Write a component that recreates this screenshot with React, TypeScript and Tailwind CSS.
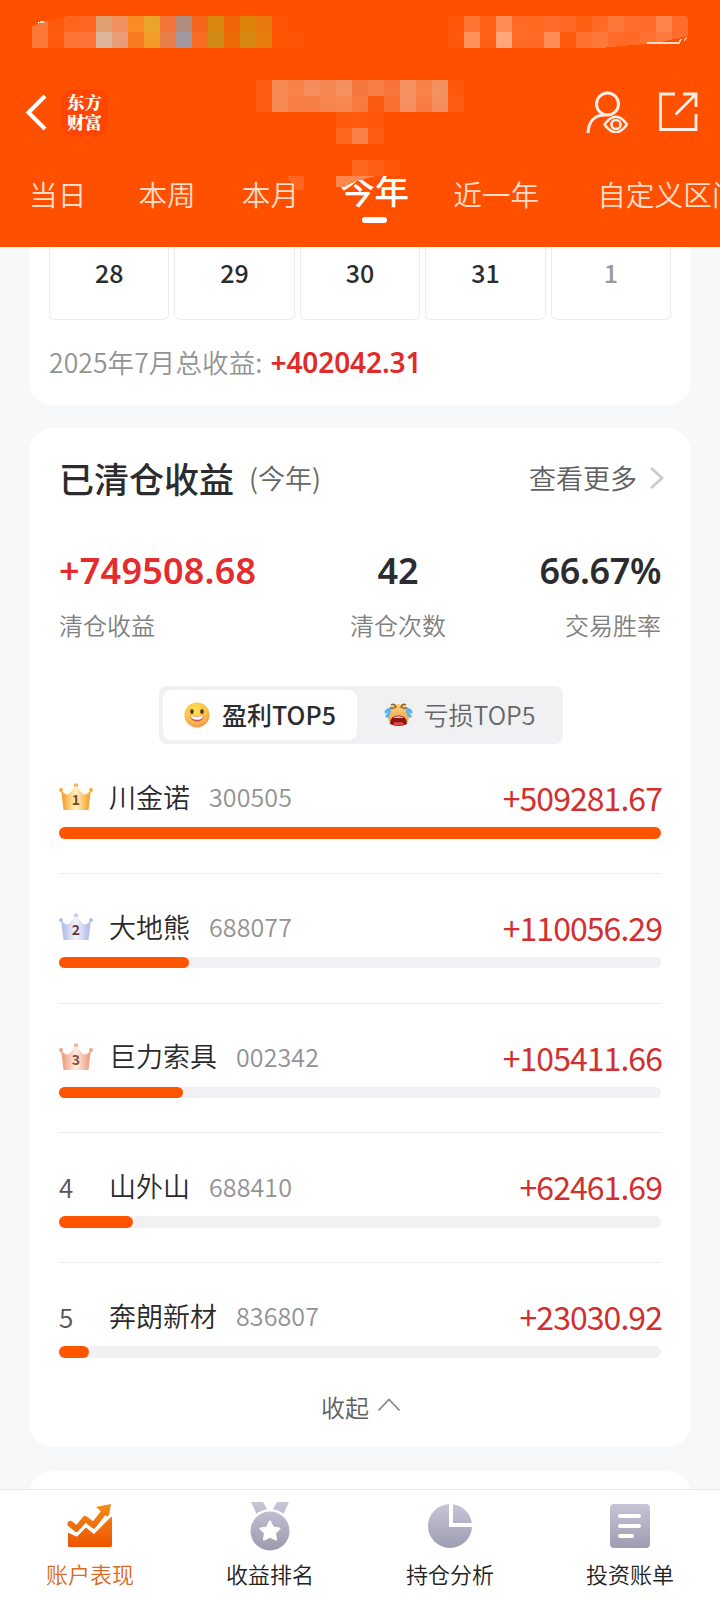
import { ReactNode } from "react";

const num = "font-['Noto_Sans','Noto_Sans_CJK_SC',sans-serif]";

const stocks = [
  { name: "川金诺", code: "300505", profit: "+509281.67", width: 602 },
  { name: "大地熊", code: "688077", profit: "+110056.29", width: 130 },
  { name: "巨力索具", code: "002342", profit: "+105411.66", width: 124 },
  { name: "山外山", code: "688410", profit: "+62461.69", width: 74 },
  { name: "奔朗新材", code: "836807", profit: "+23030.92", width: 30 },
];

const crowns = [
  { edge: "#f5a838", mid: "#fff3c4", text: "#7a4a20" },
  { edge: "#b9c0ea", mid: "#f4f5fd", text: "#6b3a2c" },
  { edge: "#f0a488", mid: "#fdeee6", text: "#8a5040" },
];

// pixelated blocks, [x, y, colour], 16px each
const blocks: [number, number, string][] = [
  [48, 16, "#ff5a0c"], [48, 32, "#ff5a0e"],
  [64, 16, "#ff651c"], [64, 32, "#ff7433"],
  [80, 16, "#ff6621"], [80, 32, "#ff7436"],
  [96, 16, "#e0a072"], [96, 32, "#ddb59a"],
  [112, 16, "#f39060"], [112, 32, "#e89c78"],
  [128, 16, "#fb8b24"], [128, 32, "#fa7a20"],
  [144, 16, "#e8a52a"], [144, 32, "#f39c2a"],
  [160, 16, "#f47338"], [160, 32, "#e87d48"],
  [176, 16, "#b38c80"], [176, 32, "#a3989f"],
  [192, 16, "#f5661c"], [192, 32, "#f66d22"],
  [208, 16, "#d8860c"], [208, 32, "#d08b16"],
  [224, 16, "#f06606"], [224, 32, "#ee6a06"],
  [240, 16, "#dd8408"], [240, 32, "#d48810"],
  [256, 16, "#e8790c"], [256, 32, "#e67c0c"],
  [272, 16, "#ff5505"], [272, 32, "#ff5606"],
  [288, 32, "#ff5505"],
  [448, 16, "#ff560a"], [448, 32, "#ff580c"],
  [464, 16, "#ff7533"], [464, 32, "#ff935c"],
  [480, 16, "#ff6216"], [480, 32, "#ff6014"],
  [496, 16, "#ff8d57"], [496, 32, "#ffa77b"],
  [512, 16, "#ff6b27"], [512, 32, "#ff6a24"],
  [528, 16, "#ff6921"], [528, 32, "#ff6a24"],
  [544, 16, "#ff6c29"], [544, 32, "#ff8d57"],
  [560, 16, "#ff6b27"], [560, 32, "#ff5a0c"],
  [576, 16, "#ff5f12"], [576, 32, "#ff7230"],
  [592, 16, "#ff6a25"], [592, 32, "#ff783a"],
  [608, 16, "#ff783a"], [608, 32, "#ff6c28"],
  [624, 16, "#ff6e2c"], [624, 32, "#ff6a24"],
  [640, 16, "#ff6c29"], [640, 32, "#ff7230"],
  [656, 16, "#ff854c"], [656, 32, "#ff7a3c"],
  [256, 80, "#ff5c12"], [256, 96, "#ff5c12"],
  [272, 80, "#f58a54"], [272, 96, "#f68a54"],
  [288, 80, "#f7824a"], [288, 96, "#f77e44"],
  [304, 80, "#f58e5c"], [304, 96, "#f67e44"],
  [320, 80, "#f58852"], [320, 96, "#f6864e"],
  [336, 80, "#f6915f"], [336, 96, "#f68850"],
  [352, 80, "#f5763c"], [352, 96, "#f87a40"],
  [368, 80, "#f88048"], [368, 96, "#fc5a10"],
  [384, 80, "#f8743a"], [384, 96, "#fa702f"],
  [400, 80, "#f79260"], [400, 96, "#f79060"],
  [416, 80, "#f88248"], [416, 96, "#f87c44"],
  [432, 80, "#f39260"], [432, 96, "#f48e5c"],
  [448, 80, "#ff580c"], [448, 96, "#ff5c12"],
  [336, 112, "#ff5a0c"], [352, 112, "#ff5a0e"], [368, 112, "#ff560a"],
  [336, 128, "#ff6820"], [352, 128, "#f98048"], [368, 128, "#ff5c12"],
  [352, 160, "#ff6820"], [368, 160, "#ff5e14"], [384, 160, "#ff5608"],
];

function Mosaic() {
  return (
    <svg className="absolute left-0 top-0 pointer-events-none" width="720" height="247" shapeRendering="crispEdges">
      <path d="M32 26L48 21V48H32z" fill="#fb7838" />
      {blocks.map(([x, y, color]) => (
        <rect key={`${x}-${y}`} x={x} y={y} width="16" height="16" fill={color} />
      ))}
      <path d="M32 16h36L32 25z" fill="#ff5000" />
      <path d="M672 16h13q3 0 3 4v16l-4 4h-12z" fill="#ff6c2c" />
      <path d="M600 48l56-5 32-7v12z" fill="#ff5000" />
      <path d="M647 43h32l2-4" fill="none" stroke="#ffd9c4" strokeWidth="1.5" />
      <path d="M687 38l-3 2" stroke="#ffc4a6" strokeWidth="1.5" />
      <path d="M38 23q4-2 7-.5" fill="none" stroke="#ffd9c4" strokeWidth="1.5" />
      <path d="M288 176h16v14h-8q-2-8-8-10z" fill="#ff6622" />
      <path d="M336 176h40l-20 5-12 6h-8z" fill="#ff8850" />
    </svg>
  );
}

function Tab({ children, className }: { children: ReactNode; className?: string }) {
  return <div className={`shrink-0 text-[28.7px] leading-10 font-[350] text-[#ffddca] ${className}`}>{children}</div>;
}

function Header() {
  return (
    <header className="relative h-[247px] shrink-0 bg-[#ff5000] overflow-hidden">
      <div className="flex items-center h-[56px] mt-[84px] pl-[25px] pr-[22px]">
        <svg width="22" height="36" viewBox="0 0 22 36" fill="none" stroke="#fff" strokeWidth="4">
          <path d="M20 2L3.500 18.500L20 35" />
        </svg>
        <div className="ml-[14px] size-[47px] rounded-xl bg-[#ff4600] flex flex-col items-center justify-center text-white text-[17.500px] leading-[20px] font-black font-['Noto_Serif_CJK_SC','Noto_Sans_CJK_SC',sans-serif]">
          <span>东方</span>
          <span>财富</span>
        </div>
        <div className="flex-1" />
        <svg width="42" height="42" viewBox="0 0 42 42" fill="none" stroke="#ffefe6" strokeWidth="3">
          <circle cx="21.500" cy="13" r="11" />
          <path d="M2 42C2.500 30 9 24 19 24" />
          <path d="M18.500 33.500Q30 18 41 33.500Q30 49 18.500 33.500z" fill="#ff5000" strokeWidth="2.600" />
          <circle cx="30" cy="33.500" r="4.500" strokeWidth="2.600" />
        </svg>
        <svg className="ml-[30px]" width="40" height="40" viewBox="0 0 40 40" fill="none" stroke="#ffefe6" strokeWidth="2.800">
          <path d="M17 2H2.500V37.500H38V22" />
          <path d="M25 2H38V15M38 2L17.500 22.500" />
        </svg>
      </div>
      <div className="flex items-center h-[56px] mt-[26px] pl-[29px] whitespace-nowrap">
        <Tab>当日</Tab>
        <Tab className="ml-[52px]">本周</Tab>
        <Tab className="ml-[46px]">本月</Tab>
        <div className="ml-[41px] h-[56px] shrink-0 flex flex-col items-center text-white">
          <div className="mt-[-1px] text-[34.500px] leading-[48px] font-medium">今年</div>
          <div className="mt-[4px] w-[25px] h-[6px] shrink-0 rounded-full bg-white" />
        </div>
        <Tab className="ml-[44px]">近一年</Tab>
        <Tab className="ml-[58px]">自定义区间</Tab>
      </div>
      <Mosaic />
    </header>
  );
}

function Crown({ rank }: { rank: number }) {
  const c = crowns[rank - 1];
  return (
    <svg width="34" height="28" viewBox="0 0 34 28">
      <defs>
        <linearGradient id={`crown${rank}`}>
          <stop offset="0.1" stopColor={c.edge} />
          <stop offset="0.5" stopColor={c.mid} />
          <stop offset="0.9" stopColor={c.edge} />
        </linearGradient>
      </defs>
      <g fill={c.edge}>
        <circle cx="2" cy="7" r="2" />
        <circle cx="17" cy="2.500" r="2.300" opacity="0.8" />
        <circle cx="32" cy="7" r="2" />
      </g>
      <path d="M2 7Q7 13 10 11L17 3L24 11Q27 13 32 7L29.500 27H4.500z" fill={`url(#crown${rank})`} />
      <text x="17" y="22" textAnchor="middle" fontSize="14" fontWeight="600" fill={c.text}>{rank}</text>
    </svg>
  );
}

function StockRow({ stock, rank }: { stock: typeof stocks[number]; rank: number }) {
  return (
    <div className={`h-[129.75px] pt-[33px] border-b ${rank == 5 ? "border-transparent" : "border-[#ededee]"}`}>
      <div className="flex items-center h-10">
        <div className="w-[50px] text-[26px] font-[350] text-[#555]">
          {rank <= 3 ? <Crown rank={rank} /> : rank}
        </div>
        <div className="text-[27px] font-[350] text-[#2a2a2a]">{stock.name}</div>
        <div className="ml-[19px] text-[25px] tracking-[0.1px] font-[350] text-[#939393]">{stock.code}</div>
        <div className="ml-auto mr-[-1px] text-[32px] tracking-[-0.95px] font-normal text-[#d23030]">{stock.profit}</div>
      </div>
      <div className="mt-[10px] h-[11.500px] rounded-full bg-[#f1f1f3]">
        <div className="h-full rounded-full bg-[#ff5400]" style={{ width: stock.width }} />
      </div>
    </div>
  );
}

function Smile() {
  return (
    <svg width="26" height="26" viewBox="0 0 26 26">
      <defs>
        <radialGradient id="smile" cx="0.45" cy="0.3" r="0.75">
          <stop offset="0" stopColor="#ffe252" />
          <stop offset="0.6" stopColor="#fbc04a" />
          <stop offset="1" stopColor="#f08a4c" />
        </radialGradient>
      </defs>
      <circle cx="13" cy="13" r="12.500" fill="url(#smile)" />
      <ellipse cx="8" cy="9.500" rx="1.800" ry="2.500" fill="#5a3a20" />
      <ellipse cx="18" cy="9.500" rx="1.800" ry="2.500" fill="#5a3a20" />
      <path d="M6 13.500Q13 15.500 20 13.500Q19 19.500 13 19.500T6 13.500z" fill="#d0584a" />
      <path d="M6.500 13.800Q13 15.500 19.500 13.800Q18.500 17.800 13 17.800T6.500 13.800z" fill="#fff" />
    </svg>
  );
}

function Cry() {
  return (
    <svg width="29" height="24" viewBox="0 0 29 24">
      <defs>
        <linearGradient id="cry" x2="0" y2="1">
          <stop offset="0" stopColor="#fbd078" />
          <stop offset="1" stopColor="#f09a48" />
        </linearGradient>
      </defs>
      <path d="M5 5Q8 1 14.500 1T24 5L25 15Q24 23 14.500 23T4 15z" fill="url(#cry)" />
      <path d="M7 2Q10 0 12 4Q9 6 6 5M22 2Q19 0 17 4Q20 6 23 5" fill="none" stroke="#7d6040" strokeWidth="1.500" />
      <path d="M6 4.500Q0 6 .5 10Q2 11 5 9Q0 12 2 15Q6 15 7 8zM23 4.500Q29 6 28.500 10Q27 11 24 9Q29 12 27 15Q23 15 22 8z" fill="#59b3ee" />
      <path d="M6 21Q6 12.500 14.500 12.500T23 21Q19 23 14.500 23T6 21z" fill="#8e1515" />
      <path d="M10 14Q14.500 12.500 19 14V15H10z" fill="#f0c0a8" />
      <path d="M9 21.500Q10 18 14.500 19.500Q19 18 20 21.500Q14.500 23.500 9 21.500z" fill="#e34a45" />
    </svg>
  );
}

function ClearedCard() {
  return (
    <section className="mt-[23px] mx-[29px] h-[1019px] shrink-0 rounded-[24px] bg-white px-[30px] overflow-hidden">
      <div className="flex items-center h-[50px] mt-[25px]">
        <h2 className="text-[35px] leading-[50px] font-medium text-[#2c2c2e]">已清仓收益</h2>
        <span className="ml-[15px] text-[27px] font-[350] text-[#666]">(今年)</span>
        <span className="ml-auto mr-[12px] text-[27px] font-[350] text-[#606060]">查看更多</span>
        <svg className="mr-[-4px]" width="16" height="24" viewBox="0 0 16 24" fill="none" stroke="#ccc" strokeWidth="2.800">
          <path d="M2 2L13 12L2 22" />
        </svg>
      </div>
      <div className="grid grid-cols-3 mt-[44px] h-[98px] text-[#2c2c2e]">
        <div>
          <div className={`${num} text-[36px] leading-[48px] font-semibold tracking-[0.2px] text-[#e52b2b]`}>+749508.68</div>
          <div className="mt-[12px] text-[24px] leading-[36px] font-[350] text-[#808080]">清仓收益</div>
        </div>
        <div className="pl-[76px] text-center">
          <div className={`${num} text-[36px] leading-[48px] font-semibold`}>42</div>
          <div className="mt-[12px] text-[24px] leading-[36px] font-[350] text-[#808080]">清仓次数</div>
        </div>
        <div className="text-right">
          <div className={`${num} text-[36px] leading-[48px] font-semibold tracking-[-0.4px]`}>66.67%</div>
          <div className="mt-[12px] text-[24px] leading-[36px] font-[350] text-[#808080]">交易胜率</div>
        </div>
      </div>
      <div className="ml-[100px] mt-[41px] flex w-[404px] h-[58px] p-[4px] rounded-lg bg-[#f1f1f3] text-[25px]">
        <div className="flex items-center justify-center w-[194px] rounded-lg bg-white font-medium text-[#2c2c2e]">
          <Smile />
          <span className="ml-[12px]">盈利TOP5</span>
        </div>
        <div className="flex flex-1 items-center justify-center pl-[4px] font-[350] text-[#666]">
          <Cry />
          <span className="ml-[10px]">亏损TOP5</span>
        </div>
      </div>
      {stocks.map((stock, idx) => (
        <StockRow key={stock.code} stock={stock} rank={idx + 1} />
      ))}
      <div className="mt-[-4px] ml-[2px] flex items-center justify-center text-[24px] leading-[36px] font-[350] text-[#606060]">
        收起
        <svg className="ml-[8px] mt-[-4px]" width="24" height="15" viewBox="0 0 24 15" fill="none" stroke="#888" strokeWidth="1.800">
          <path d="M1.500 13.500L12 2.500L22.500 13.500" />
        </svg>
      </div>
    </section>
  );
}

function NavItem({ label, active, children }: { label: string; active?: boolean; children: ReactNode }) {
  return (
    <div className="flex-1 flex flex-col items-center">
      <svg className="mt-[10px]" width="50" height="52" viewBox="0 0 50 52">{children}</svg>
      <div className={`mt-[4px] text-[22px] leading-[34px] font-[350] ${active ? "text-[#dc6a20]" : "text-[#222]"}`}>{label}</div>
    </div>
  );
}

function BottomNav() {
  return (
    <nav className="flex h-[111px] shrink-0 border-t border-[#e9e9eb] bg-white">
      <NavItem label="账户表现" active>
        <defs>
          <linearGradient id="orange" gradientUnits="userSpaceOnUse" x1="0" y1="4" x2="0" y2="47">
            <stop offset="0" stopColor="#f08c18" />
            <stop offset="1" stopColor="#ee5400" />
          </linearGradient>
          <linearGradient id="gray" gradientUnits="userSpaceOnUse" x1="0" y1="2" x2="0" y2="50">
            <stop offset="0" stopColor="#c8c6d8" />
            <stop offset="1" stopColor="#9c9aae" />
          </linearGradient>
        </defs>
        <path d="M3 32L12 36L21 27.500L29 34L45 17Q47 16 47 18V45.500Q47 47 45.500 47H4.500Q3 47 3 45.500z" fill="url(#orange)" />
        <path d="M5.500 24L12 29L20 19L28.500 25.500L39 12" fill="none" stroke="url(#orange)" strokeWidth="6" strokeLinejoin="round" strokeLinecap="round" />
        <path d="M31 7L46 4L43.500 18z" fill="url(#orange)" />
        <path d="M2 30.500L11.500 35L21 25L29 31.500L46 15" fill="none" stroke="#fff" strokeWidth="3" />
      </NavItem>
      <NavItem label="收益排名">
        <path d="M6 2H18L23 11L12 15zM44 2H32L27 11L38 15z" fill="url(#gray)" />
        <circle cx="25" cy="31" r="22" fill="#fff" />
        <circle cx="25" cy="31" r="19.500" fill="url(#gray)" />
        <path d="M25 21.500L28 27.500L34.500 28.500L30 33L31 39.500L25 36.500L19 39.500L20 33L15.500 28.500L22 27.500z" fill="#fff" stroke="#fff" strokeWidth="2" strokeLinejoin="round" />
      </NavItem>
      <NavItem label="持仓分析">
        <circle cx="25" cy="26" r="22" fill="url(#gray)" />
        <path d="M26 3V25H48" fill="none" stroke="#fff" strokeWidth="4" />
      </NavItem>
      <NavItem label="投资账单">
        <rect x="5" y="4" width="40" height="44" rx="4" fill="url(#gray)" />
        <path d="M15 16H34M15 26H34M15 36H27" stroke="#fff" strokeWidth="4" strokeLinecap="round" />
      </NavItem>
    </nav>
  );
}

export default function App() {
  return (
    <main className="w-[720px] h-[1600px] overflow-hidden flex flex-col bg-[#f7f8fa] font-['Noto_Sans_CJK_SC',sans-serif]">
      <Header />
      <section className="mx-[29px] h-[158px] shrink-0 rounded-b-[24px] bg-white px-[20px]">
        <div className="grid grid-cols-5 gap-[5px]">
          {["28", "29", "30", "31", "1"].map((day) => (
            <div
              key={day}
              className={`h-[73px] border border-t-0 border-[#ececee] rounded-b-md pt-[7px] text-center text-[25px] leading-[36px] font-medium ${day == "1" ? "text-[#999]" : "text-[#2c2c2e]"}`}
            >
              {day}
            </div>
          ))}
        </div>
        <div className="flex items-center h-10 mt-[22px] whitespace-nowrap">
          <span className="text-[26.500px] tracking-[0.1px] font-[350] text-[#939393]">2025年7月总收益:</span>
          <span className={`${num} ml-[8px] text-[28px] tracking-[-0.1px] font-semibold text-[#e02b2b]`}>+402042.31</span>
        </div>
      </section>
      <ClearedCard />
      <div className="mt-[24px] mx-[29px] h-[18px] shrink-0 overflow-hidden">
        <div className="h-[60px] rounded-t-[24px] bg-white" />
      </div>
      <BottomNav />
    </main>
  );
}
